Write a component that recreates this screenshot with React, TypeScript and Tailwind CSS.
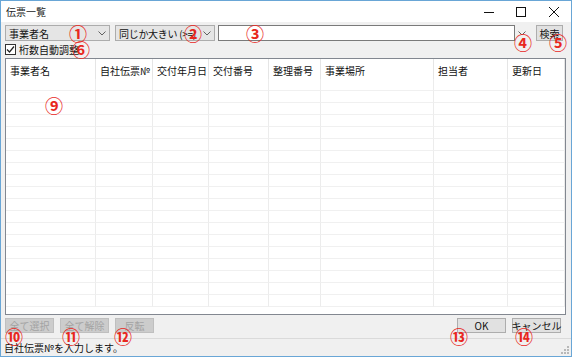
const font = "font-['Noto_Sans_CJK_JP','Noto_Sans',sans-serif]";

const columns = [
  { label: "事業者名", w: "w-[90px]" },
  { label: "自社伝票№", w: "w-[57px]" },
  { label: "交付年月日", w: "w-[56px]" },
  { label: "交付番号", w: "w-[60px]" },
  { label: "整理番号", w: "w-[52px]" },
  { label: "事業場所", w: "w-[113px]" },
  { label: "担当者", w: "w-[74px]" },
  { label: "更新日", w: "w-[57px]" },
];

const rows = Array.from({ length: 19 });

function Chevron() {
  return (
    <svg width="8" height="5" viewBox="0 0 8 5" className="shrink-0">
      <path d="M0.5 0.5 L4 4 L7.5 0.5" fill="none" stroke="#606060" strokeWidth="1" />
    </svg>
  );
}

function Mark({ n, className }: { n: string; className: string }) {
  return (
    <span className={`absolute text-[18px] font-bold leading-none text-[#e8281e] ${className}`}>{n}</span>
  );
}

function Btn({ label, w, disabled }: { label: string; w: string; disabled?: boolean }) {
  return (
    <div
      className={`${w} h-[15px] flex items-center justify-center border whitespace-nowrap text-[10px] leading-none ${
        disabled ? "text-[#a3a3a3] border-[#bfbfbf] bg-[#cccccc]" : "text-[#111] border-[#adadad] bg-[#e1e1e1]"
      }`}
    >
      {label}
    </div>
  );
}

export default function App() {
  return (
    <div className={`${font} relative w-[572px] h-[357px] bg-[#f0f0f0] border border-[#69a6d6] flex flex-col text-[10px] text-[#111] overflow-hidden`}>
      {/* title bar */}
      <div className="h-[21px] bg-white flex items-center shrink-0">
        <span className="pl-[5px] text-[10px] text-[#222]">伝票一覧</span>
        <div className="ml-auto flex items-center">
          <div className="w-[32px] h-[21px] flex items-center justify-center">
            <svg width="10" height="10" viewBox="0 0 10 10">
              <path d="M0 5.5 H10" stroke="#111" strokeWidth="1" />
            </svg>
          </div>
          <div className="w-[32px] h-[21px] flex items-center justify-center">
            <svg width="10" height="10" viewBox="0 0 10 10">
              <rect x="0.5" y="0.5" width="9" height="9" fill="none" stroke="#111" strokeWidth="1" />
            </svg>
          </div>
          <div className="w-[34px] h-[21px] flex items-center justify-center">
            <svg width="10" height="10" viewBox="0 0 10 10">
              <path d="M0 0 L10 10 M10 0 L0 10" stroke="#111" strokeWidth="1" />
            </svg>
          </div>
        </div>
      </div>

      {/* search row */}
      <div className="flex items-center h-[16px] mt-[3px] pl-[4px] shrink-0">
        <div className="w-[105px] h-[16px] border border-[#acacac] bg-[#e5e5e5] flex items-center px-[3px]">
          <span className="flex-1">事業者名</span>
          <Chevron />
        </div>
        <div className="ml-[5px] w-[100px] h-[16px] border border-[#acacac] bg-[#e5e5e5] flex items-center px-[3px]">
          <span className="flex-1 whitespace-nowrap tracking-[-0.3px]">同じか大きい (&gt;=)</span>
          <Chevron />
        </div>
        <div className="ml-[3px] w-[297px] h-[16px] border border-[#7a7a7a] bg-white" />
        <div className="w-[13px] h-[16px] flex items-center justify-center">
          <Chevron />
        </div>
        <div className="ml-[8px] w-[27px] h-[16px] border border-[#adadad] bg-[#e1e1e1] flex items-center justify-center">
          検索
        </div>
      </div>

      {/* checkbox row */}
      <div className="flex items-center h-[13px] mt-[2px] pl-[4px] shrink-0">
        <div className="w-[11px] h-[11px] border border-[#333] bg-white flex items-center justify-center">
          <svg width="9" height="9" viewBox="0 0 9 9">
            <path d="M1 4.5 L3.5 7 L8 1.5" fill="none" stroke="#222" strokeWidth="1.2" />
          </svg>
        </div>
        <span className="ml-[3px]">桁数自動調整</span>
      </div>

      {/* list */}
      <div className="mt-[2px] ml-[4px] w-[561px] h-[257px] border border-[#828790] bg-white overflow-hidden shrink-0">
        <div className="flex h-[20px]">
          {columns.map((c) => (
            <div key={c.label} className={`${c.w} h-full border-r border-[#e5e5e5] pl-[4px] pt-[4px] whitespace-nowrap overflow-hidden`}>
              {c.label}
            </div>
          ))}
        </div>
        {rows.map((_, i) => (
          <div key={i} className="flex h-[12px]">
            {columns.map((c) => (
              <div key={c.label} className={`${c.w} h-full border-r border-b border-r-[#ececec] border-b-[#f0f0f0]`} />
            ))}
          </div>
        ))}
      </div>

      {/* bottom buttons */}
      <div className="flex items-center h-[15px] mt-[3px] pl-[4px] pr-[10px] shrink-0">
        <Btn label="全て選択" w="w-[49px]" disabled />
        <div className="ml-[6px]">
          <Btn label="全て解除" w="w-[49px]" disabled />
        </div>
        <div className="ml-[6px]">
          <Btn label="反転" w="w-[39px]" disabled />
        </div>
        <div className="ml-auto flex gap-[6px]">
          <Btn label="OK" w="w-[49px]" />
          <Btn label="キャンセル" w="w-[49px]" />
        </div>
      </div>

      {/* status bar */}
      <div className="mt-auto h-[18px] border-t border-[#dadada] flex items-center pl-[3px] relative shrink-0">
        <span>自社伝票№を入力します。</span>
        <svg width="8" height="8" viewBox="0 0 8 8" className="absolute right-[2px] bottom-[2px]">
          {[
            [6, 0],
            [6, 3],
            [3, 3],
            [6, 6],
            [3, 6],
            [0, 6],
          ].map(([x, y], i) => (
            <rect key={i} x={x} y={y} width="2" height="2" fill="#b8b8b8" />
          ))}
        </svg>
      </div>

      {/* annotation marks */}
      <Mark n="①" className="left-[68px] top-[23px]" />
      <Mark n="②" className="left-[183px] top-[23px]" />
      <Mark n="③" className="left-[245px] top-[23px]" />
      <Mark n="④" className="left-[513px] top-[32px]" />
      <Mark n="⑤" className="left-[548px] top-[32px]" />
      <Mark n="⑥" className="left-[71px] top-[39px]" />
      <Mark n="⑨" className="left-[44px] top-[95px]" />
      <Mark n="⑩" className="left-[4px] top-[326px]" />
      <Mark n="⑪" className="left-[61px] top-[326px]" />
      <Mark n="⑫" className="left-[113px] top-[326px]" />
      <Mark n="⑬" className="left-[449px] top-[326px]" />
      <Mark n="⑭" className="left-[514px] top-[326px]" />
    </div>
  );
}
